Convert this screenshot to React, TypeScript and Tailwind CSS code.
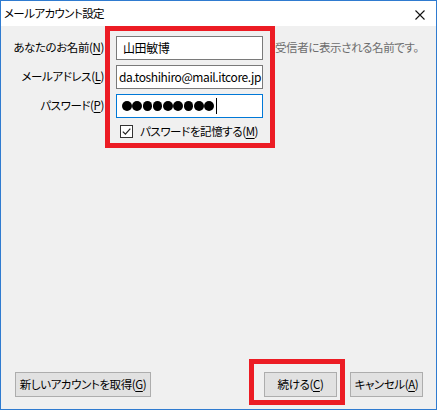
import React from 'react';

const font = { fontFamily: '"Noto Sans CJK JP", "Noto Sans", sans-serif' };

function Key({ k }: { k: string }) {
    return (
        <>
            (<span className="underline underline-offset-2">{k}</span>)
        </>
    );
}

function Field({ children, focused, end }: { children: React.ReactNode; focused?: boolean; end?: boolean }) {
    return (
        <div
            className={`h-[24px] w-[147px] bg-white border flex items-center overflow-hidden whitespace-nowrap px-[6px] text-[12px] text-black ${
                focused ? 'border-[#0078d7]' : 'border-[#7a7a7a]'
            } ${end ? 'justify-end pr-[1px]' : ''}`}
        >
            {children}
        </div>
    );
}

function Btn({ children, w }: { children: React.ReactNode; w: string }) {
    return (
        <div className={`h-[25px] ${w} bg-[#e1e1e1] border border-[#adadad] flex items-center justify-center whitespace-nowrap text-[11.5px] tracking-[-0.4px] text-black`}>
            {children}
        </div>
    );
}

export default function App() {
    return (
        <div
            className="w-[437px] h-[410px] flex flex-col border border-[#2f7bd0] bg-[#f0f0f0] [font-feature-settings:'palt']"
            style={font}
        >
            {/* Title bar */}
            <div className="h-[25px] bg-white flex items-center justify-between pl-[3px] pr-[11px] shrink-0">
                <span className="text-[11.5px] tracking-[-0.6px] text-black">メールアカウント設定</span>
                <svg width="10" height="10" viewBox="0 0 10 10" className="mt-[2px]">
                    <path d="M0.5 0.5 L9.5 9.5 M9.5 0.5 L0.5 9.5" stroke="#111" strokeWidth="1.1" />
                </svg>
            </div>

            {/* Body */}
            <div className="relative flex-1 flex flex-col justify-between">
                <div className="pt-[10px] grid grid-cols-[103px_147px_auto] gap-x-[12px] gap-y-[5px] items-center text-[11.5px] tracking-[-0.4px] text-black">
                    <div className="text-right whitespace-nowrap">あなたのお名前<Key k="N" /></div>
                    <Field>山田敏博</Field>
                    <div className="text-[#6d6d6d] whitespace-nowrap">受信者に表示される名前です。</div>

                    <div className="text-right whitespace-nowrap">メールアドレス<Key k="L" /></div>
                    <Field end>
                        <span className="shrink-0 tracking-[-0.4px]">da.toshihiro@mail.itcore.jp</span>
                    </Field>
                    <div />

                    <div className="text-right whitespace-nowrap">パスワード<Key k="P" /></div>
                    <Field focused>
                        <span className="flex gap-[0.8px] -ml-[1px]">
                            {Array.from({ length: 9 }).map((_, i) => (
                                <span key={i} className="w-[9.5px] h-[9.5px] rounded-full bg-black" />
                            ))}
                        </span>
                        <span className="ml-[2px] w-px h-[16px] bg-black" />
                    </Field>
                    <div />

                    <div />
                    <div className="flex items-center gap-[7px] pl-[4px]">
                        <span className="w-[13px] h-[13px] border border-[#333] bg-white flex items-center justify-center">
                            <svg width="9" height="9" viewBox="0 0 9 9">
                                <path d="M0.8 4.6 L3.4 7.2 L8.3 1.6" fill="none" stroke="#222" strokeWidth="1.2" />
                            </svg>
                        </span>
                        <span className="whitespace-nowrap">パスワードを記憶する<Key k="M" /></span>
                    </div>
                    <div />
                </div>

                <div className="flex items-center pl-[14px] pr-[13px] pb-[12px]">
                    <Btn w="w-[136px]">新しいアカウントを取得<Key k="G" /></Btn>
                    <div className="ml-auto flex gap-[13px]">
                        <Btn w="w-[73px]">続ける<Key k="C" /></Btn>
                        <Btn w="w-[73px]">キャンセル<Key k="A" /></Btn>
                    </div>
                </div>

                {/* Red highlight annotations */}
                <div className="absolute left-[104px] top-0 w-[170px] h-[122px] border-[5px] border-[#ec1c24] pointer-events-none" />
                <div className="absolute left-[248px] top-[333px] w-[96px] h-[46px] border-[5px] border-[#ec1c24] pointer-events-none" />
            </div>
        </div>
    );
}
